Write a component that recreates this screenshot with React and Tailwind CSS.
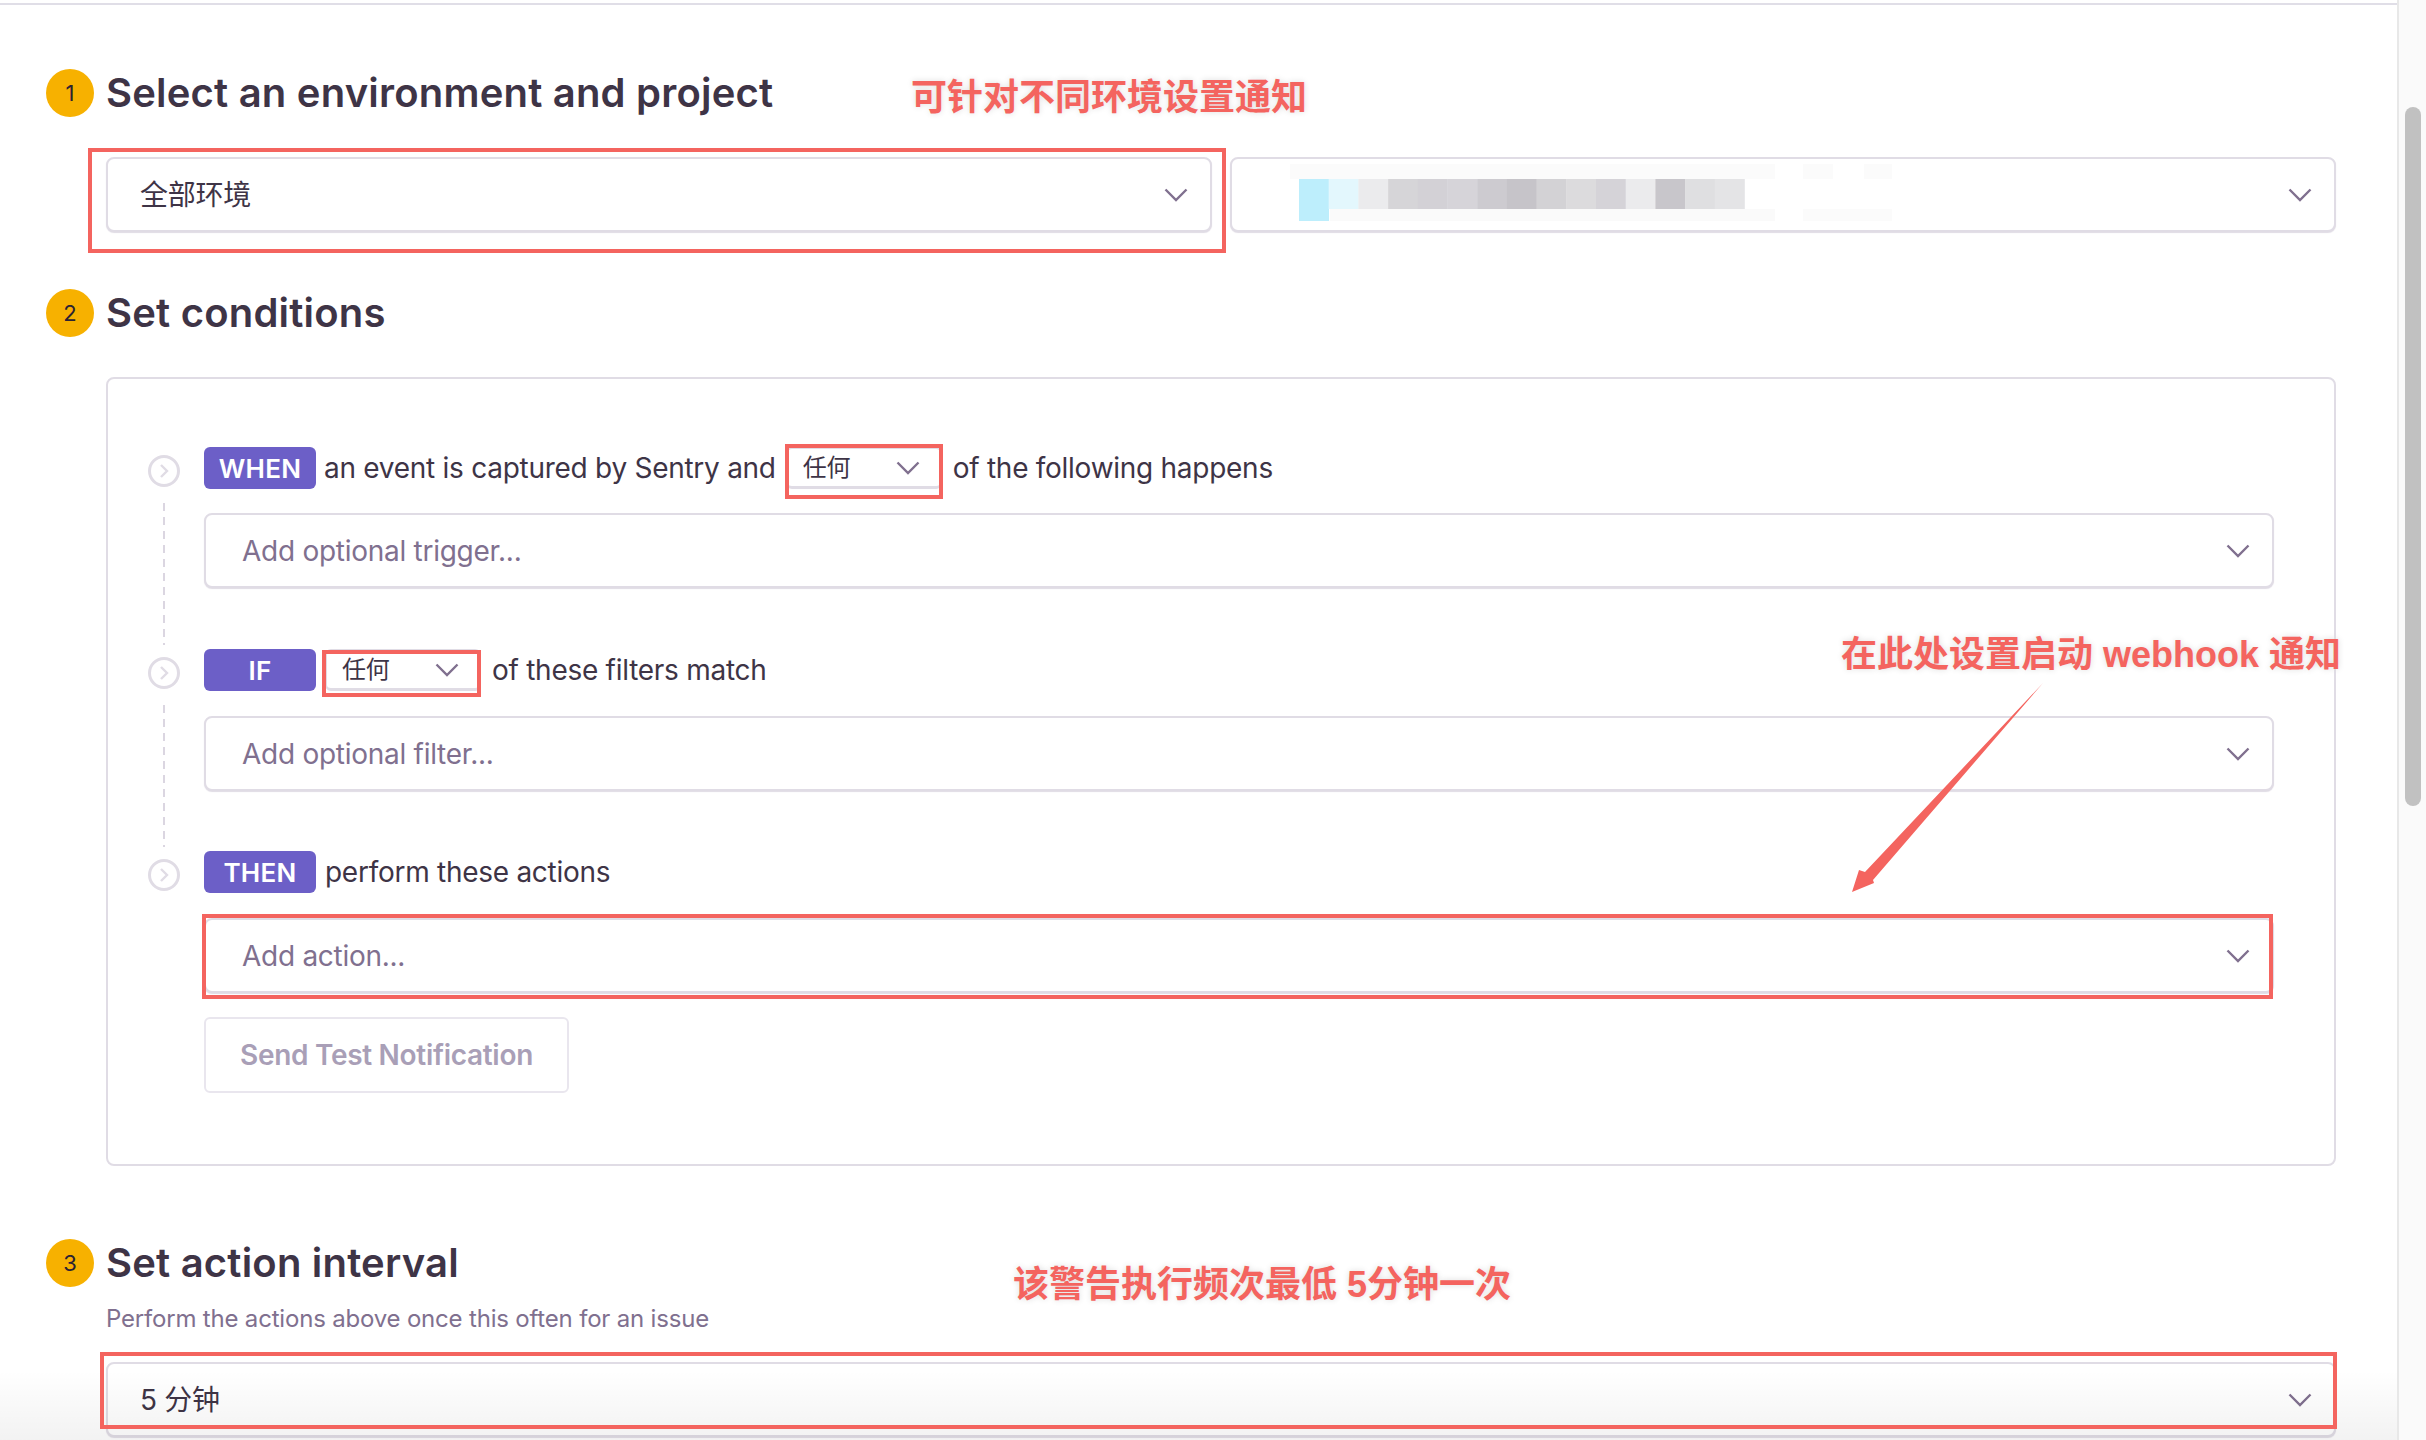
import React from 'react';

const mosaic = ['#bdeefc', '#e3f7fd', '#ebebed', '#d6d5d8', '#d3d1d6', '#d6d4d9', '#cdcbd0', '#c6c4c9', '#d3d2d5', '#dcdbdd', '#d5d3d8', '#ebebed', '#c8c6cb', '#dfdfe1', '#e4e4e6'];

const Chevron = () => (
    <svg width="24" height="14" viewBox="0 0 24 14" fill="none" className="shrink-0">
        <path d="M1.5 1.5 L12 12 L22.5 1.5" stroke="#80708f" strokeWidth="2.4" />
    </svg>
);

const Select = ({ children, placeholder, className = '' }) => (
    <div className={`h-[75px] flex items-center justify-between pr-[22px] bg-white rounded-lg border-2 border-[#e0dce5] shadow-[0_1px_1px_#e0dce5] text-[28px] tracking-[-0.27px] ${placeholder ? 'pl-[36px] text-[#80708f]' : 'pl-[32px] text-[#3e3446]'} ${className}`}>
        <span>{children}</span>
        <Chevron />
    </div>
);

const MiniSelect = ({ className = '' }) => (
    <div className={`w-[156px] h-[42px] flex items-center justify-between pl-[15px] pr-[20px] bg-white rounded-md border-2 border-b-[3px] border-[#e0dce5] text-[24px] text-[#3e3446] ${className}`}>
        <span>任何</span>
        <Chevron />
    </div>
);

const StepHeader = ({ n, title }) => (
    <div className="flex items-center h-[48px] gap-[12px]">
        <div className="w-[48px] h-[48px] rounded-full bg-[#f7b100] flex items-center justify-center text-[22px] text-[#2b2233]">{n}</div>
        <h2 className="text-[40px] font-semibold tracking-[0.2px] text-[#3e3446] whitespace-nowrap">{title}</h2>
    </div>
);

const Badge = ({ children }) => (
    <div className="w-[112px] h-[42px] shrink-0 rounded-md bg-[#6c5fc7] flex items-center justify-center text-[26px] font-semibold tracking-[0.3px] text-white">{children}</div>
);

// one WHEN / IF / THEN step with its timeline marker on the left
const Rule = ({ last, className = '', children }) => (
    <div className={`flex ${className}`}>
        <div className="w-[56px] shrink-0 flex flex-col pt-[8px]">
            <div className="w-[32px] h-[32px] rounded-full border-[3px] border-[#e0dce5] flex items-center justify-center">
                <svg width="10" height="16" viewBox="0 0 10 16" fill="none">
                    <path d="M2 2 L8 8 L2 14" stroke="#e0dce5" strokeWidth="2.4" />
                </svg>
            </div>
            {!last && (
                <div className="flex-1 w-[2px] ml-[15px] mt-[16px] mb-[4px] bg-[repeating-linear-gradient(to_bottom,#dbd6e1_0,#dbd6e1_8px,transparent_8px,transparent_14px)]" />
            )}
        </div>
        <div className="flex-1 min-w-0">{children}</div>
    </div>
);

const Sentence = ({ children }) => (
    <div className="flex items-center h-[42px] text-[28px] tracking-[-0.27px] text-[#3e3446] whitespace-nowrap">{children}</div>
);

const App = () => {
    return (
        <div className="relative w-[2426px] h-[1440px] overflow-hidden flex bg-white font-[Inter,'Noto_Sans_CJK_SC',sans-serif]">
            <main className="flex-1 min-w-0 pt-[3px]">
                <div className="border-t-2 border-[#e0dee7] pl-[46px] pr-[61px] pt-[64px]">
                    <StepHeader n="1" title="Select an environment and project" />
                    <div className="ml-[60px] mt-[40px] flex gap-[18px]">
                        <Select className="flex-1">全部环境</Select>
                        <Select className="flex-1">
                            <svg width="640" height="62" viewBox="0 0 640 62" className="block -ml-[2px]">
                                <rect x="28" y="0" width="485" height="15" fill="#fbfbfb" />
                                <rect x="541" y="0" width="30" height="15" fill="#fbfbfb" />
                                <rect x="602" y="0" width="28" height="15" fill="#fbfbfb" />
                                <rect x="68" y="45" width="445" height="12" fill="#fafafa" />
                                <rect x="541" y="45" width="89" height="12" fill="#fbfbfb" />
                                {mosaic.map((c, i) => (
                                    <rect key={i} x={37 + i * 29.7} y="15" width="30" height="30" fill={c} />
                                ))}
                                <rect x="37" y="45" width="30" height="12" fill="#bdeefc" />
                            </svg>
                        </Select>
                    </div>

                    <div className="mt-[57px]">
                        <StepHeader n="2" title="Set conditions" />
                    </div>
                    <div className="ml-[60px] mt-[40px] h-[789px] rounded-lg border-2 border-[#e0dce5] pl-[40px] pr-[60px] pt-[68px]">
                        <Rule className="h-[202px]">
                            <Sentence>
                                <Badge>WHEN</Badge>
                                <span className="ml-[8px]">an event is captured by Sentry and</span>
                                <MiniSelect className="ml-[10px] mr-[11px]" />
                                <span>of the following happens</span>
                            </Sentence>
                            <Select placeholder className="mt-[24px]">Add optional trigger...</Select>
                        </Rule>
                        <Rule className="h-[202px]">
                            <Sentence>
                                <Badge>IF</Badge>
                                <MiniSelect className="ml-[9px] mr-[11px]" />
                                <span>of these filters match</span>
                            </Sentence>
                            <Select placeholder className="mt-[25px]">Add optional filter...</Select>
                        </Rule>
                        <Rule last>
                            <Sentence>
                                <Badge>THEN</Badge>
                                <span className="ml-[9px]">perform these actions</span>
                            </Sentence>
                            <Select placeholder className="mt-[25px]">Add action...</Select>
                            <button className="mt-[24px] w-[365px] h-[76px] rounded-md border-2 border-[#e9e6ee] bg-white text-[28px] font-semibold tracking-[-0.3px] text-[#a99fb7]">Send Test Notification</button>
                        </Rule>
                    </div>

                    <div className="mt-[73px]">
                        <StepHeader n="3" title="Set action interval" />
                    </div>
                    <p className="ml-[60px] mt-[16px] text-[24px] leading-[32px] tracking-[-0.19px] text-[#80708f]">Perform the actions above once this often for an issue</p>
                    <Select className="ml-[60px] mt-[27px]">5 分钟</Select>
                </div>
            </main>

            <aside className="w-[29px] shrink-0 border-l-2 border-[#e8e8e8] bg-[#fafafa]">
                <div className="mt-[107px] mx-auto w-[16px] h-[699px] rounded-full bg-[#c1c1c1]" />
            </aside>

            {/* soft shade at the bottom of the capture */}
            <div className="absolute left-0 right-[29px] bottom-0 h-[70px] pointer-events-none bg-gradient-to-b from-transparent to-black/5" />

            {/* red review marks drawn on top of the page */}
            <div className="absolute left-[88px] top-[148px] w-[1138px] h-[105px] border-[4px] border-[#f4645f] pointer-events-none" />
            <div className="absolute left-[785px] top-[444px] w-[158px] h-[55px] border-[4px] border-[#f4645f] pointer-events-none" />
            <div className="absolute left-[322px] top-[650px] w-[159px] h-[47px] border-[4px] border-[#f4645f] pointer-events-none" />
            <div className="absolute left-[202px] top-[914px] w-[2071px] h-[85px] border-[4px] border-[#f4645f] pointer-events-none" />
            <div className="absolute left-[100px] top-[1352px] w-[2237px] h-[77px] border-[4px] border-[#f4645f] pointer-events-none" />

            <span className="absolute left-[911px] top-[76px] text-[36px] leading-[44px] font-bold text-[#f4645f] whitespace-nowrap font-['Liberation_Sans','Noto_Sans_CJK_SC',sans-serif] [text-shadow:0_0_6px_#dddddd]">可针对不同环境设置通知</span>
            <span className="absolute left-[1841px] top-[633px] text-[36px] leading-[44px] font-bold text-[#f4645f] whitespace-nowrap font-['Liberation_Sans','Noto_Sans_CJK_SC',sans-serif] [text-shadow:0_0_6px_#dddddd]">在此处设置启动 webhook 通知</span>
            <span className="absolute left-[1013px] top-[1263px] text-[36px] leading-[44px] font-bold text-[#f4645f] whitespace-nowrap font-['Liberation_Sans','Noto_Sans_CJK_SC',sans-serif] [text-shadow:0_0_6px_#dddddd]">该警告执行频次最低 5分钟一次</span>

            <svg className="absolute left-0 top-0 pointer-events-none" width="2426" height="1440" fill="none">
                <path d="M2043 683 L1873 880 L1874 883 L1852 892 L1859 870 L1865 872 Z" fill="#f4645f" />
            </svg>
        </div>
    );
};

export default App;
